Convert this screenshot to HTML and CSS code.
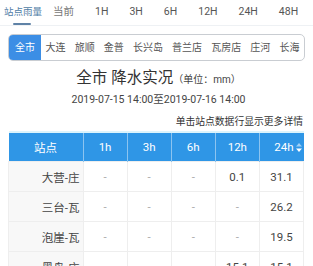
FILE: index.html
```html
<!DOCTYPE html>
<html lang="zh">
<head>
    <meta charset="UTF-8">
    <meta name="viewport" content="width=device-width, initial-scale=1.0">
    <title>站点雨量</title>
    <link rel="stylesheet" href="styles.css">
</head>
<body>
    <div class="tabs">
        <div class="tab tab-main active">站点雨量</div>
        <div class="tab tab-now">当前</div>
        <div class="tab">1H</div>
        <div class="tab">3H</div>
        <div class="tab">6H</div>
        <div class="tab">12H</div>
        <div class="tab">24H</div>
        <div class="tab">48H</div>
    </div>

    <div class="areas">
        <div class="area on">全市</div>
        <div class="area">大连</div>
        <div class="area">旅顺</div>
        <div class="area">金普</div>
        <div class="area">长兴岛</div>
        <div class="area">普兰店</div>
        <div class="area">瓦房店</div>
        <div class="area">庄河</div>
        <div class="area">长海</div>
    </div>

    <div class="head">
        <div class="title">全市 降水实况<span class="unit">（单位：mm）</span></div>
        <div class="range">2019-07-15 14:00至2019-07-16 14:00</div>
    </div>
    <div class="hint">单击站点数据行显示更多详情</div>

    <table class="rain">
        <thead>
            <tr>
                <th class="c-name">站点</th>
                <th>1h</th>
                <th>3h</th>
                <th>6h</th>
                <th>12h</th>
                <th class="sorted">24h<svg class="sort" width="6" height="9" viewBox="0 0 6 9"><path d="M3 0L6 3.5H0Z" fill="#9fd0f5"/><path d="M3 9L6 5.5H0Z" fill="#ffffff"/></svg></th>
            </tr>
        </thead>
        <tbody>
            <tr><td class="c-name">大营-庄</td><td class="none">-</td><td class="none">-</td><td class="none">-</td><td>0.1</td><td>31.1</td></tr>
            <tr><td class="c-name">三台-瓦</td><td class="none">-</td><td class="none">-</td><td class="none">-</td><td class="none">-</td><td>26.2</td></tr>
            <tr><td class="c-name">泡崖-瓦</td><td class="none">-</td><td class="none">-</td><td class="none">-</td><td class="none">-</td><td>19.5</td></tr>
            <tr><td class="c-name">黑岛-庄</td><td class="none">-</td><td class="none">-</td><td class="none">-</td><td>15.1</td><td>15.1</td></tr>
        </tbody>
    </table>
</body>
</html>
```

FILE: styles.css
```css
body {
    margin: 0;
    background: #fff;
    font-family: Roboto, "Noto Sans CJK SC", sans-serif;
    color: #333;
    overflow: hidden;
}
.tabs {
    display: flex;
    align-items: center;
    height: 25px;
    padding-left: 4px;
    border-bottom: 1px solid #eef1f4;
    gap: 21px;
}
.tab {
    position: relative;
    font-size: 10.5px;
    color: #555;
    line-height: 21px;
    margin-top: -3px;
}
.tab-main {
    font-size: 9.5px;
    color: #4f7da6;
    margin-right: -10px;
}
.tab-main::after {
    content: "";
    position: absolute;
    left: 9px;
    width: 18px;
    bottom: -3px;
    height: 2px;
    border-radius: 1px;
    background: #5f82a6;
}
.tab-now {
    font-size: 10.5px;
    color: #777;
}
.areas {
    display: flex;
    margin: 8px 8px 0;
    height: 25px;
    border: 1px solid #c9cdd2;
    border-radius: 5px;
    overflow: hidden;
}
.area {
    flex: 1 1 auto;
    text-align: center;
    font-size: 10px;
    line-height: 25px;
    color: #555;
    padding: 0 3px;
}
.area.on {
    flex: 0 0 auto;
    padding: 0 6px;
    background: #3c8ee5;
    color: #fff;
}
.head {
    text-align: center;
    margin-top: 7px;
    margin-left: 4px;
}
.title {
    font-size: 15.5px;
    line-height: 20px;
    color: #333;
}
.unit {
    font-size: 10px;
    color: #444;
}
.range {
    font-size: 10.5px;
    line-height: 14px;
    margin-top: 3px;
    color: #444;
}
.hint {
    text-align: right;
    font-size: 9.8px;
    line-height: 14px;
    color: #333;
    padding-right: 10px;
    margin-top: 8px;
}
.rain {
    width: 296px;
    margin: 2px 8px 0;
    border-collapse: collapse;
    table-layout: fixed;
    border-top: 2px solid #dcf4fc;
}
.rain th {
    height: 28px;
    padding: 0;
    background: #2f96e6;
    color: #fff;
    font-weight: normal;
    font-size: 11.5px;
    border-left: 1px solid #8cc4f0;
    text-align: center;
}
.rain th:first-child {
    border-left: none;
    width: 74px;
}
.rain th.sorted {
    text-align: right;
    padding-right: 2px;
}
.sort {
    margin-left: 2px;
    vertical-align: -1px;
}
.rain td {
    height: 29px;
    padding: 0;
    border: 1px solid #eeeeee;
    text-align: center;
    font-size: 11.5px;
    color: #444;
}
.rain td.c-name {
    text-align: right;
    padding-right: 3px;
    background: #f8f8f8;
    color: #444;
}
.rain td.none {
    color: #aaa;
}
```
